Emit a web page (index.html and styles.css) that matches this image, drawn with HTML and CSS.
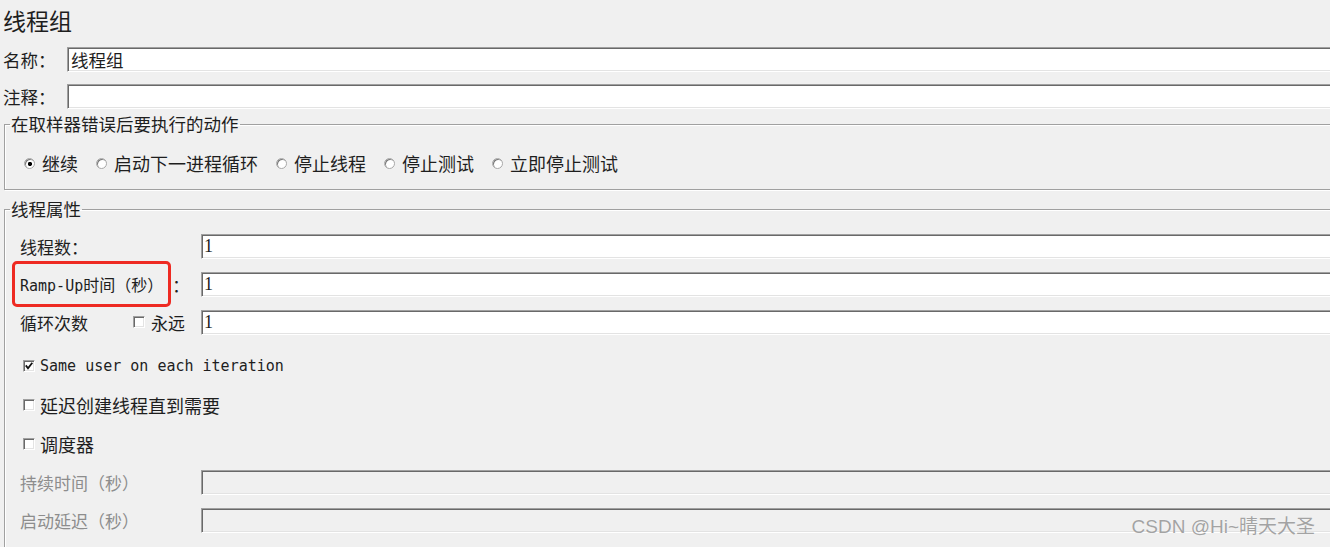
FILE: index.html
```html
<!DOCTYPE html>
<html lang="zh-CN">
<head>
  <meta charset="UTF-8">
  <meta name="viewport" content="width=device-width, initial-scale=1.0">
  <title>线程组</title>
  <link rel="stylesheet" href="styles.css">
</head>
<body>
  <div class="page">
    <div class="panel">
      <h1 class="title">线程组</h1>

      <div class="field-row">
        <label class="field-label">名称：</label>
        <div class="input">线程组</div>
      </div>
      <div class="field-row">
        <label class="field-label">注释：</label>
        <div class="input"></div>
      </div>

      <fieldset class="group group-error">
        <legend>在取样器错误后要执行的动作</legend>
        <div class="radio-row">
          <span class="radio-item"><span class="radio checked"></span>继续</span>
          <span class="radio-item"><span class="radio"></span>启动下一进程循环</span>
          <span class="radio-item"><span class="radio"></span>停止线程</span>
          <span class="radio-item"><span class="radio"></span>停止测试</span>
          <span class="radio-item"><span class="radio"></span>立即停止测试</span>
        </div>
      </fieldset>

      <fieldset class="group group-props">
        <legend>线程属性</legend>
        <div class="props-body">
          <div class="prop-row">
            <span class="prop-label">线程数：</span>
            <div class="input value">1</div>
          </div>

          <div class="prop-row">
            <span class="prop-label"><span class="marked"><span class="mono">Ramp-Up</span>时间（秒）</span><span class="colon">：</span></span>
            <div class="input value">1</div>
          </div>

          <div class="prop-row">
            <span class="prop-label">
              <span class="loop-text">循环次数</span>
              <span class="check"></span><span class="check-text">永远</span>
            </span>
            <div class="input value">1</div>
          </div>

          <div class="check-row first">
            <span class="check checked">
              <svg width="8" height="8" viewBox="0 0 8 8"><path d="M0.8 3.4 L3 6.2 L7.3 0.8" fill="none" stroke="#111" stroke-width="1.8"/></svg>
            </span>
            <span class="mono">Same user on each iteration</span>
          </div>
          <div class="check-row">
            <span class="check"></span>
            <span>延迟创建线程直到需要</span>
          </div>
          <div class="check-row">
            <span class="check"></span>
            <span>调度器</span>
          </div>

          <div class="prop-row disabled first-disabled">
            <span class="prop-label">持续时间（秒）</span>
            <div class="input"></div>
          </div>
          <div class="prop-row disabled">
            <span class="prop-label">启动延迟（秒）</span>
            <div class="input"></div>
          </div>
        </div>
      </fieldset>
    </div>

    <div class="watermark">CSDN @Hi~晴天大圣</div>
  </div>
</body>
</html>
```

FILE: styles.css
```css
html, body {
  margin: 0;
  padding: 0;
}

body {
  background: #f0f0f0;
  font-family: "Noto Sans CJK SC", sans-serif;
  font-size: 17.5px;
  color: #1e1e1e;
  overflow: hidden;
}

.page {
  width: 1330px;
  height: 547px;
  overflow: hidden;
  position: relative;
}

.panel {
  width: 1380px;
  padding-top: 5px;
}

.title {
  margin: 0;
  padding-left: 3px;
  font-size: 23px;
  font-weight: normal;
  line-height: 30px;
}

.mono {
  font-family: "DejaVu Sans Mono", monospace;
  font-size: 15px;
}

/* top name / comment rows */
.field-row {
  display: flex;
  align-items: center;
  height: 25px;
  margin-top: 12px;
  padding-left: 3px;
}

.field-label {
  width: 64px;
  line-height: 25px;
}

.input {
  flex: 1;
  height: 25px;
  box-sizing: border-box;
  background: #fff;
  border-top: 1px solid #a0a0a0;
  border-left: 1px solid #a0a0a0;
  border-bottom: 1px solid #fff;
  box-shadow: inset 1px 1px 0 #696969, inset 0 -1px 0 #e3e3e3;
  padding-left: 3px;
  line-height: 23px;
  white-space: nowrap;
}

.input.value {
  font-family: "Liberation Serif", serif;
  font-size: 18px;
  padding-left: 2px;
}

/* group boxes */
.group {
  margin: 5px 0 0 4px;
  padding: 0;
  min-width: 0;
  border: 1px solid #a0a0a0;
  box-shadow: inset 1px 1px 0 #fff, 1px 1px 0 #fff;
}

.group legend {
  margin-left: 5px;
  padding: 0 1px;
  line-height: 20px;
  font-size: 17.5px;
}

.group-props {
  margin-top: 9px;
}

.props-body {
  padding: 8px 0 40px 15px;
}

.radio-row {
  display: flex;
  align-items: center;
  height: 30px;
  padding: 14px 0 11px 19px;
  gap: 18px;
  font-size: 18px;
}

.radio-item {
  display: flex;
  align-items: center;
  gap: 7px;
}

.radio {
  width: 11px;
  height: 11px;
  box-sizing: border-box;
  border-radius: 50%;
  border: 1px solid #a8a8a8;
  background: #fff;
  box-shadow: inset 1px 1px 0 #7a7a7a;
}

.radio.checked {
  background: radial-gradient(circle at 55% 55%, #000 0 1.8px, #fff 2.4px);
}

/* property rows */
.prop-row {
  display: flex;
  align-items: center;
  height: 38px;
}

.prop-label {
  width: 181px;
  flex: none;
  display: flex;
  align-items: center;
  font-size: 17px;
}

.marked {
  position: relative;
  font-size: 16px;
}

.marked::after {
  content: "";
  position: absolute;
  left: -8px;
  right: -8px;
  top: -11px;
  bottom: -11px;
  border: 3px solid #ee2a22;
  border-radius: 5px;
}

.colon {
  margin-left: 9px;
}

.loop-text {
  width: 113px;
}

.check-text {
  margin-left: 6px;
}

.check {
  display: inline-flex;
  align-items: center;
  justify-content: center;
  flex: none;
  width: 12px;
  height: 12px;
  box-sizing: border-box;
  background: #fff;
  border-top: 1px solid #a0a0a0;
  border-left: 1px solid #a0a0a0;
  border-bottom: 1px solid #fff;
  border-right: 1px solid #fff;
  box-shadow: inset 1px 1px 0 #696969, inset -1px -1px 0 #e3e3e3;
}

.check-row {
  display: flex;
  align-items: center;
  gap: 5px;
  height: 39px;
  padding-left: 3px;
  font-size: 18px;
}

.check-row.first {
  margin-top: 5px;
}

.disabled .prop-label {
  color: #8d8d8d;
}

.disabled .input {
  background: #f0f0f0;
}

.watermark {
  position: absolute;
  right: 15px;
  bottom: 9px;
  font-family: "Liberation Sans", "Noto Sans CJK SC", sans-serif;
  font-size: 19px;
  line-height: 22px;
  color: #a3a3a3;
  text-shadow: 0 0 1px #fff;
}
```
